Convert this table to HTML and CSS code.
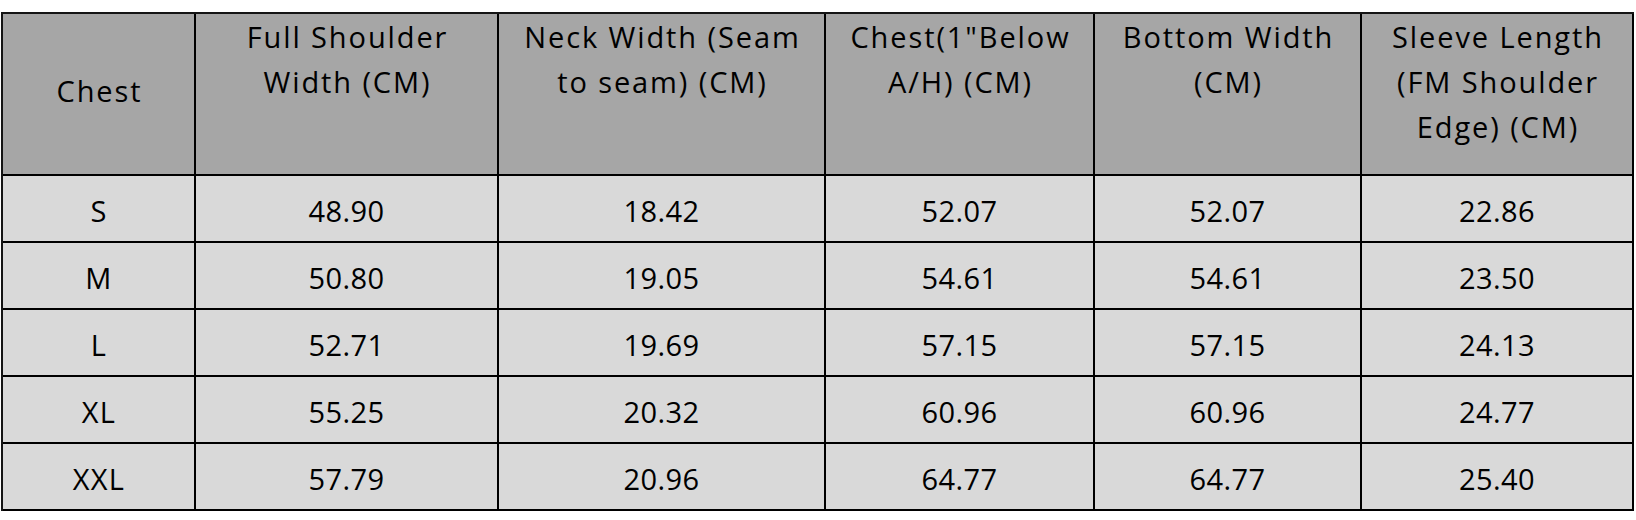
FILE: index.html
```html
<!DOCTYPE html>
<html lang="en">
<head>
<meta charset="utf-8">
<title>Size Chart</title>
<link rel="stylesheet" href="styles.css">
</head>
<body>
<div class="chart">
  <div class="cell head head-mid">Chest</div>
  <div class="cell head">Full Shoulder<br>Width (CM)</div>
  <div class="cell head">Neck Width (Seam<br>to seam) (CM)</div>
  <div class="cell head">Chest(1"Below<br>A/H) (CM)</div>
  <div class="cell head">Bottom Width<br>(CM)</div>
  <div class="cell head">Sleeve Length<br>(FM Shoulder<br>Edge) (CM)</div>

  <div class="cell size">S</div><div class="cell">48.90</div><div class="cell">18.42</div><div class="cell">52.07</div><div class="cell">52.07</div><div class="cell">22.86</div>
  <div class="cell size">M</div><div class="cell">50.80</div><div class="cell">19.05</div><div class="cell">54.61</div><div class="cell">54.61</div><div class="cell">23.50</div>
  <div class="cell size">L</div><div class="cell">52.71</div><div class="cell">19.69</div><div class="cell">57.15</div><div class="cell">57.15</div><div class="cell">24.13</div>
  <div class="cell size">XL</div><div class="cell">55.25</div><div class="cell">20.32</div><div class="cell">60.96</div><div class="cell">60.96</div><div class="cell">24.77</div>
  <div class="cell size">XXL</div><div class="cell">57.79</div><div class="cell">20.96</div><div class="cell">64.77</div><div class="cell">64.77</div><div class="cell">25.40</div>
</div>
</body>
</html>
```

FILE: styles.css
```css
html, body {
  margin: 0;
  padding: 0;
  background: #ffffff;
}

body {
  padding: 12px 0 0 1px;
  font-family: "Open Sans", Lato, "Liberation Sans", sans-serif;
  color: #000000;
}

.chart {
  display: grid;
  grid-template-columns: 193px 303px 327px 269px 267px 272px;
  grid-template-rows: 162px repeat(5, 67px);
  width: max-content;
  border-left: 2px solid #141414;
  border-top: 2px solid #141414;
}

.cell {
  box-sizing: border-box;
  border-right: 2px solid #000000;
  border-bottom: 2px solid #000000;
  background: #d9d9d9;
  font-size: 29px;
  line-height: 45px;
  letter-spacing: 0.4px;
  text-align: center;
  display: flex;
  align-items: center;
  justify-content: center;
  padding-top: 4px;
}

.head {
  background: #a6a6a6;
  align-items: flex-start;
  padding-top: 0;
  padding-left: 2px;
  letter-spacing: 1.9px;
}

.head-mid {
  align-items: center;
  padding-bottom: 8px;
}

.size {
  letter-spacing: 1.3px;
  padding-left: 1px;
}
```
